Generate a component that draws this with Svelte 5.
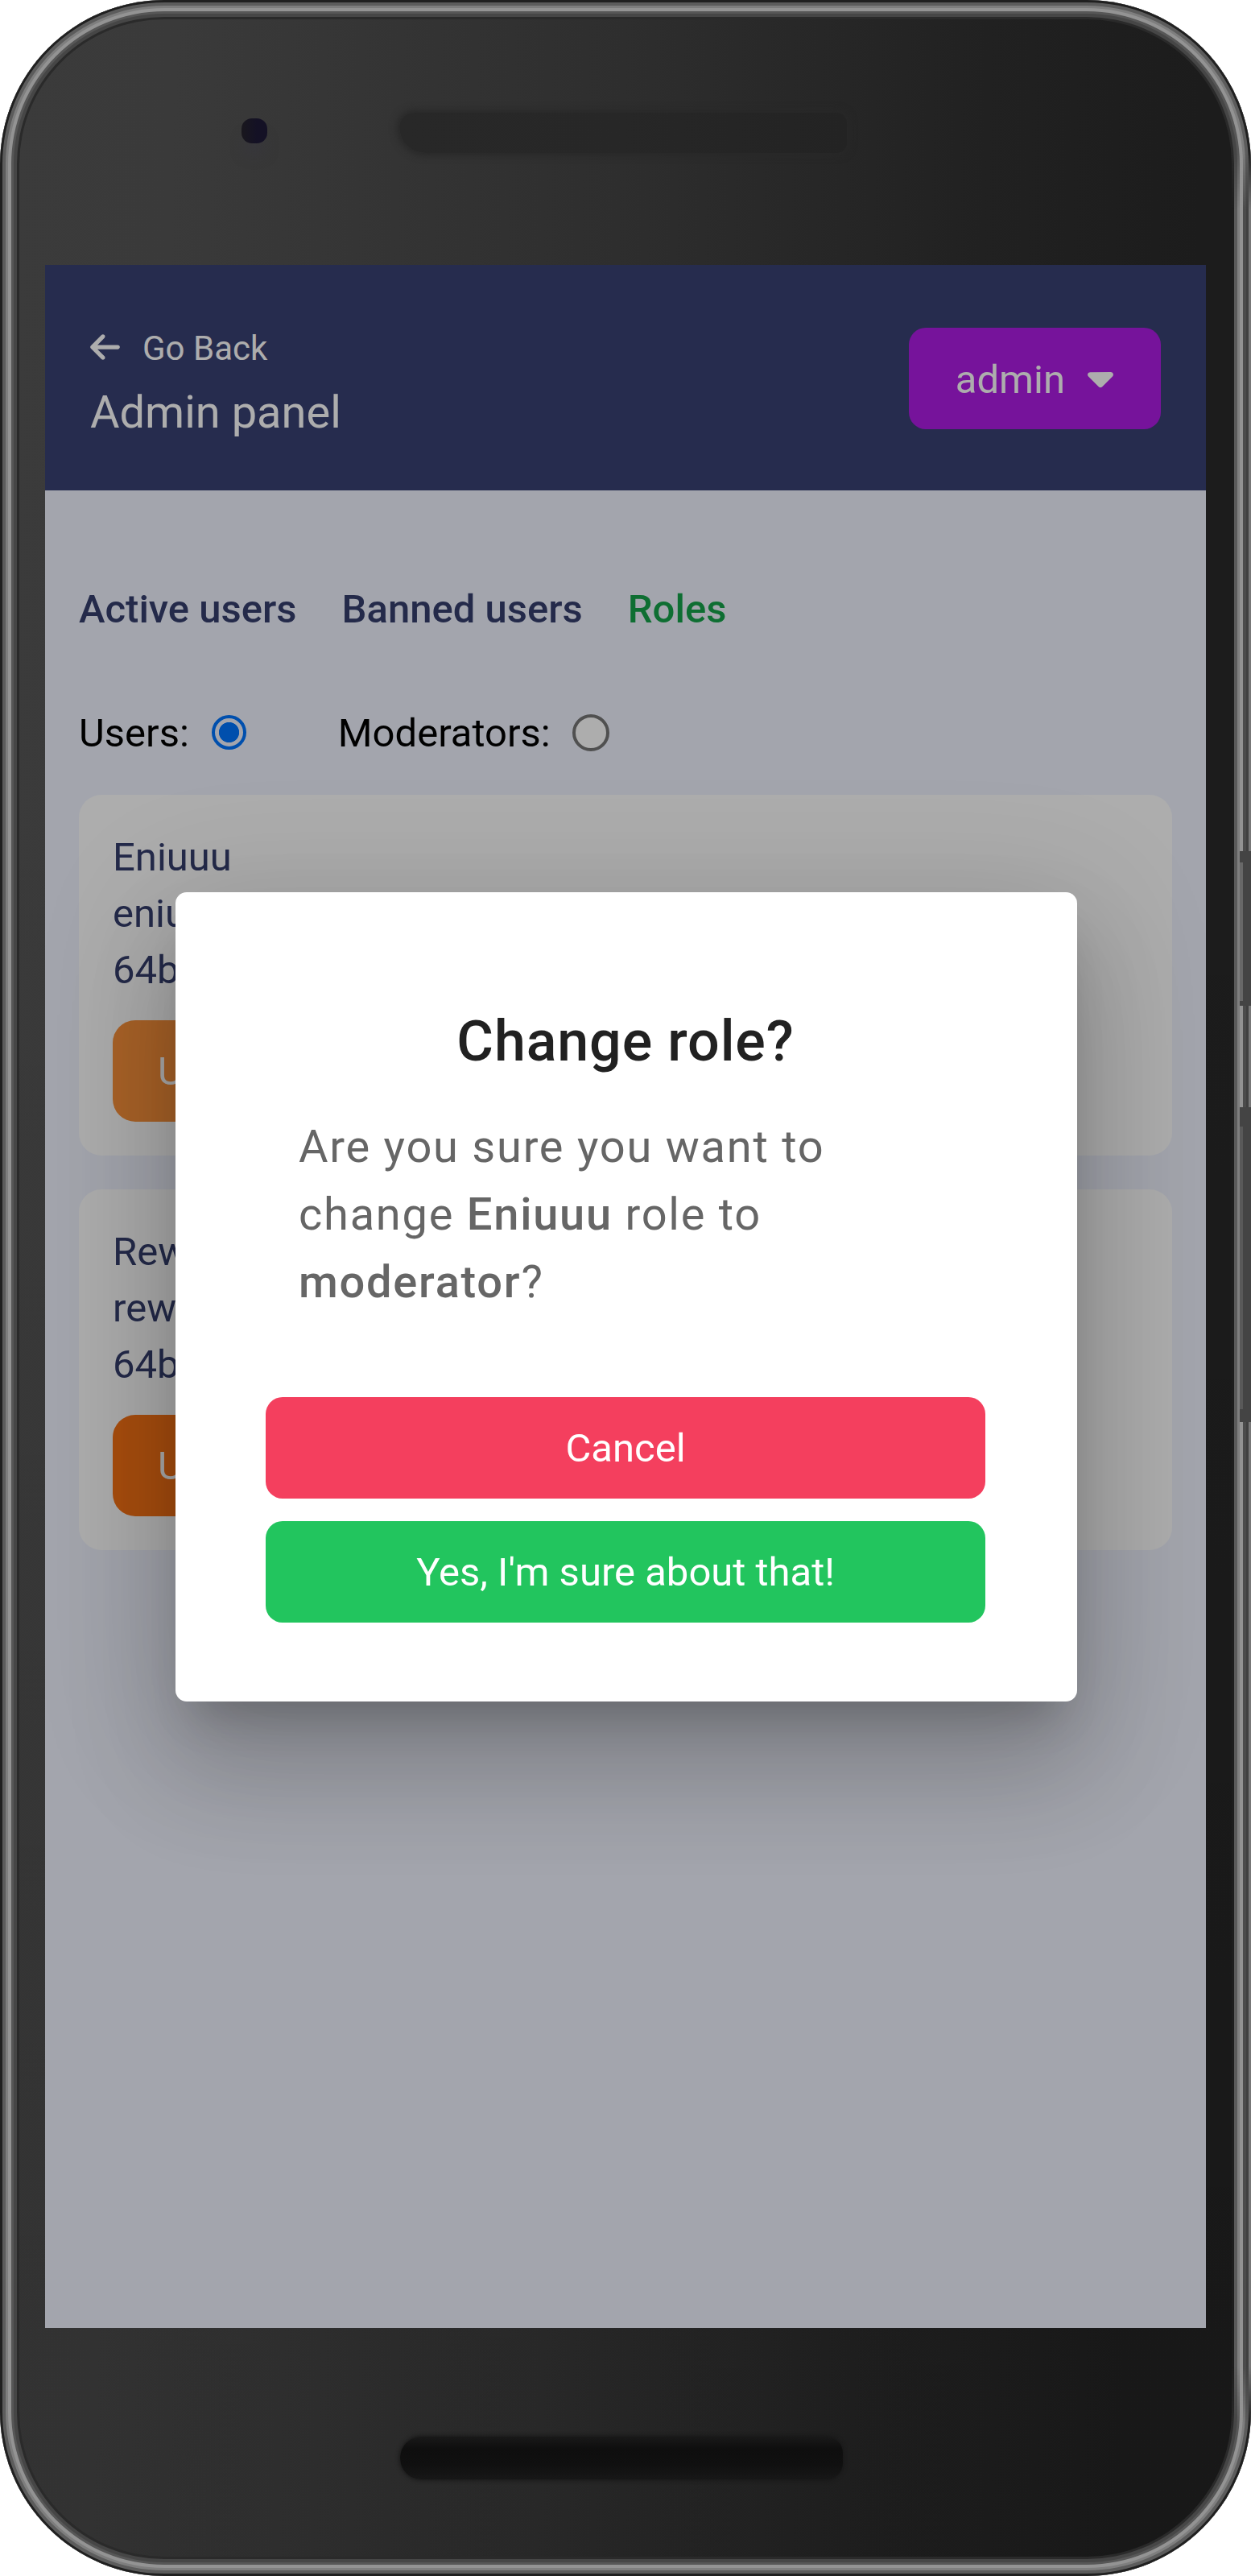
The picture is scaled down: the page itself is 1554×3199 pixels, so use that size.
<script>
  let group = $state('users');

  const tabs = [
    { label: 'Active users', active: false },
    { label: 'Banned users', active: false },
    { label: 'Roles', active: true }
  ];

  const users = [
    { name: 'Eniuuu', handle: 'eniuuu', id: '64b7', disabled: true },
    { name: 'Rewop', handle: 'rewop', id: '64b9', disabled: false }
  ];
</script>

<div class="phone">
  <div class="edge"></div>
  <div class="key power"></div>
  <div class="key volume"></div>
  <div class="camera"></div>
  <div class="speaker"></div>
  <div class="slot"></div>

  <div class="screen">
    <header>
      <div class="heading">
        <a class="back" href="#back">
          <svg viewBox="0 0 448 512" aria-hidden="true"><path d="M9.4 233.4c-12.5 12.5-12.5 32.8 0 45.3l160 160c12.5 12.5 32.8 12.5 45.3 0s12.5-32.8 0-45.3L109.2 288 416 288c17.7 0 32-14.3 32-32s-14.3-32-32-32l-306.7 0L214.6 118.6c12.5-12.5 12.5-32.8 0-45.3s-32.8-12.5-45.3 0l-160 160z" /></svg>
          <span>Go Back</span>
        </a>
        <h1>Admin panel</h1>
      </div>
      <button class="account">
        <span>admin</span>
        <svg viewBox="0 0 320 512" aria-hidden="true"><path d="M137.4 374.6c12.5 12.5 32.8 12.5 45.3 0l128-128c9.2-9.2 11.9-22.9 6.9-34.9s-16.6-19.8-29.6-19.8L32 192c-12.9 0-24.6 7.8-29.6 19.8s-2.2 25.7 6.9 34.9l128 128z" /></svg>
      </button>
    </header>

    <main>
      <nav>
        {#each tabs as tab}
          <a href="#tab" class:active={tab.active}>{tab.label}</a>
        {/each}
      </nav>

      <div class="filters">
        <label>Users:<input type="radio" value="users" bind:group /></label>
        <label>Moderators:<input type="radio" value="moderators" bind:group /></label>
      </div>

      <div class="cards">
        {#each users as user}
          <section class="card">
            <p>{user.name}</p>
            <p>{user.handle}</p>
            <p>{user.id}</p>
            <button class="role" disabled={user.disabled}>User</button>
          </section>
        {/each}
      </div>
    </main>

    <div class="backdrop">
      <div class="dialog" role="dialog" aria-modal="true">
        <h2>Change role?</h2>
        <p>Are you sure you want to change <b>Eniuuu</b> role to <b>moderator</b>?</p>
        <div class="actions">
          <button class="cancel">Cancel</button>
          <button class="confirm">Yes, I'm sure about that!</button>
        </div>
      </div>
    </div>
  </div>
</div>

<style>
  :global(body) {
    background: #fff;
  }

  .phone,
  .phone * {
    box-sizing: border-box;
  }

  .phone {
    position: relative;
    width: 1554px;
    height: 3199px;
    padding: 329px 56px 308px;
    border-radius: 204px;
    overflow: hidden;
    font-family: Roboto, sans-serif;
    background:
      linear-gradient(180deg, rgba(0, 0, 0, 0) 30%, rgba(0, 0, 0, 0.14) 92%),
      linear-gradient(92deg, #3b3b3b 0, #3a3a3a 220px, #2e2e2e 777px, #212121 1230px, #1c1c1c 1500px);
  }

  /* Metal rim round the whole body */
  .phone::after {
    content: '';
    position: absolute;
    z-index: 1;
    inset: 0;
    border-radius: inherit;
    pointer-events: none;
    box-shadow:
      inset 0 0 0 3px #202020,
      inset 0 0 0 7px #5c5c5c,
      inset 0 0 0 10px #7e7e7e,
      inset 0 0 0 14px #939393,
      inset 0 0 0 17px #575757,
      inset 0 0 0 21px #464646,
      inset 0 0 0 24px #2a2a2a;
  }

  .edge {
    position: absolute;
    z-index: 2;
    top: 190px;
    right: 0;
    bottom: 190px;
    width: 24px;
    background: linear-gradient(90deg, #1d1d1d 3px, #5a5a5a 3px 7px, #7f7f7f 7px 10px, #929292 10px 14px, #4b4b4b 14px 18px, #404040 18px 21px, #777 21px);
    mask-image: linear-gradient(180deg, transparent, #000 70px calc(100% - 70px), transparent);
  }

  .key {
    position: absolute;
    z-index: 3;
    right: 0;
    width: 14px;
    background: #444;
  }

  .key::before {
    content: '';
    position: absolute;
    inset: 14px auto 6px 0;
    width: 4px;
    background: #686868;
  }

  .power {
    top: 1057px;
    height: 192px;
  }

  .volume {
    top: 1375px;
    height: 391px;
  }

  .volume::before {
    inset: 24px auto 16px 0;
    background: #595959;
  }

  .camera {
    position: absolute;
    left: 300px;
    top: 147px;
    width: 32px;
    height: 31px;
    border-radius: 13px;
    background: linear-gradient(90deg, #19171d, #141125 60%);
    box-shadow: 0 18px 18px -6px rgba(56, 54, 70, 0.5);
  }

  .speaker {
    position: absolute;
    left: 496px;
    top: 140px;
    width: 556px;
    height: 50px;
    border-radius: 20px 14px 14px 36px;
    background: linear-gradient(90deg, #282828, #272727 50%, #232323);
    box-shadow: 0 0 10px 3px #282828;
  }

  .slot {
    position: absolute;
    left: 497px;
    top: 3026px;
    width: 550px;
    height: 53px;
    border-radius: 26px 20px 20px 26px;
    background: linear-gradient(180deg, #191919, #0e0e0e 28%, #101010 65%, #171717);
    box-shadow: 0 0 5px 1px #171717;
  }

  .screen {
    position: relative;
    width: 1442px;
    height: 2562px;
    overflow: hidden;
    background: #f0f4ff;
  }

  button {
    border: 0;
    font: 400 49px/70px Roboto, sans-serif;
    color: #fff;
  }

  header {
    display: flex;
    justify-content: space-between;
    align-items: center;
    height: 280px;
    padding: 2px 56px 0;
    background: #394173;
    color: #fff;
  }

  .heading {
    padding-top: 8px;
  }

  .back {
    display: flex;
    align-items: center;
    gap: 28px;
    font-size: 42px;
    line-height: 70px;
    color: inherit;
    text-decoration: none;
  }

  .back span {
    padding-top: 3px;
  }

  .back svg {
    width: 37px;
    height: 42px;
    fill: currentColor;
  }

  h1 {
    margin: 0;
    padding-top: 2px;
    font-size: 56px;
    font-weight: 400;
    line-height: 84px;
  }

  .account {
    display: flex;
    align-items: center;
    gap: 28px;
    height: 126px;
    padding: 0 59px 0 58px;
    border-radius: 21px;
    background: #af1ce5;
  }

  .account span {
    padding-top: 3px;
  }

  .account svg {
    width: 32px;
    height: 51px;
    margin-bottom: 3px;
    fill: currentColor;
  }

  main {
    padding: 113px 42px 0;
  }

  nav {
    display: flex;
    gap: 56px;
    font-size: 49px;
    font-weight: 500;
    line-height: 70px;
  }

  nav a {
    color: #363f6e;
    text-decoration: none;
  }

  nav a.active {
    color: #16a34a;
  }

  .filters {
    display: flex;
    gap: 114px;
    margin-top: 84px;
    font-size: 49px;
    line-height: 70px;
    color: #000;
  }

  label {
    display: flex;
    align-items: center;
    gap: 27px;
  }

  input {
    appearance: none;
    width: 46px;
    height: 46px;
    margin: 0 0 3px;
    border: 4px solid #767676;
    border-radius: 50%;
    background: #fff;
  }

  input:checked {
    width: 43px;
    height: 43px;
    margin-left: 1px;
    border-color: #0075ff;
    background: radial-gradient(circle, #0075ff 12.2px, transparent 13px);
  }

  .cards {
    display: flex;
    flex-direction: column;
    gap: 42px;
    margin-top: 41px;
  }

  .card {
    height: 448px;
    padding: 43px 42px 42px;
    border-radius: 28px;
    background: #fff;
    font-size: 49px;
    line-height: 70px;
    color: #363f6e;
  }

  .card p {
    margin: 0;
  }

  .role {
    display: block;
    height: 126px;
    margin-top: 27px;
    padding: 2px 56px 0;
    border-radius: 28px;
    background: #f97316;
  }

  .role:disabled {
    background: #fb923c;
  }

  .backdrop {
    position: absolute;
    inset: 0;
    display: flex;
    align-items: center;
    justify-content: center;
    padding-left: 2px;
    background: rgba(0, 0, 0, 0.32);
  }

  .dialog {
    width: 1120px;
    height: 1005px;
    padding: 140px 114px 0 112px;
    border-radius: 14px;
    background: #fff;
    box-shadow:
      0 38.5px 52.5px -24.5px rgba(0, 0, 0, 0.2),
      0 84px 133px 10.5px rgba(0, 0, 0, 0.14),
      0 31.5px 161px 28px rgba(0, 0, 0, 0.12);
  }

  h2 {
    margin: 0;
    font-size: 70px;
    font-weight: 500;
    line-height: 90px;
    letter-spacing: 0.0125em;
    text-align: center;
    color: #212121;
  }

  .dialog p {
    width: 720px;
    margin: 44px 0 0 41px;
    font-size: 56px;
    line-height: 84px;
    letter-spacing: 0.03125em;
    color: #666;
  }

  b {
    font-weight: 500;
  }

  .actions {
    display: flex;
    flex-direction: column;
    gap: 28px;
    margin-top: 101px;
  }

  .actions button {
    height: 126px;
    padding-top: 3px;
    border-radius: 21px;
  }

  .cancel {
    background: #f43f5e;
  }

  .confirm {
    background: #22c55e;
  }
</style>
